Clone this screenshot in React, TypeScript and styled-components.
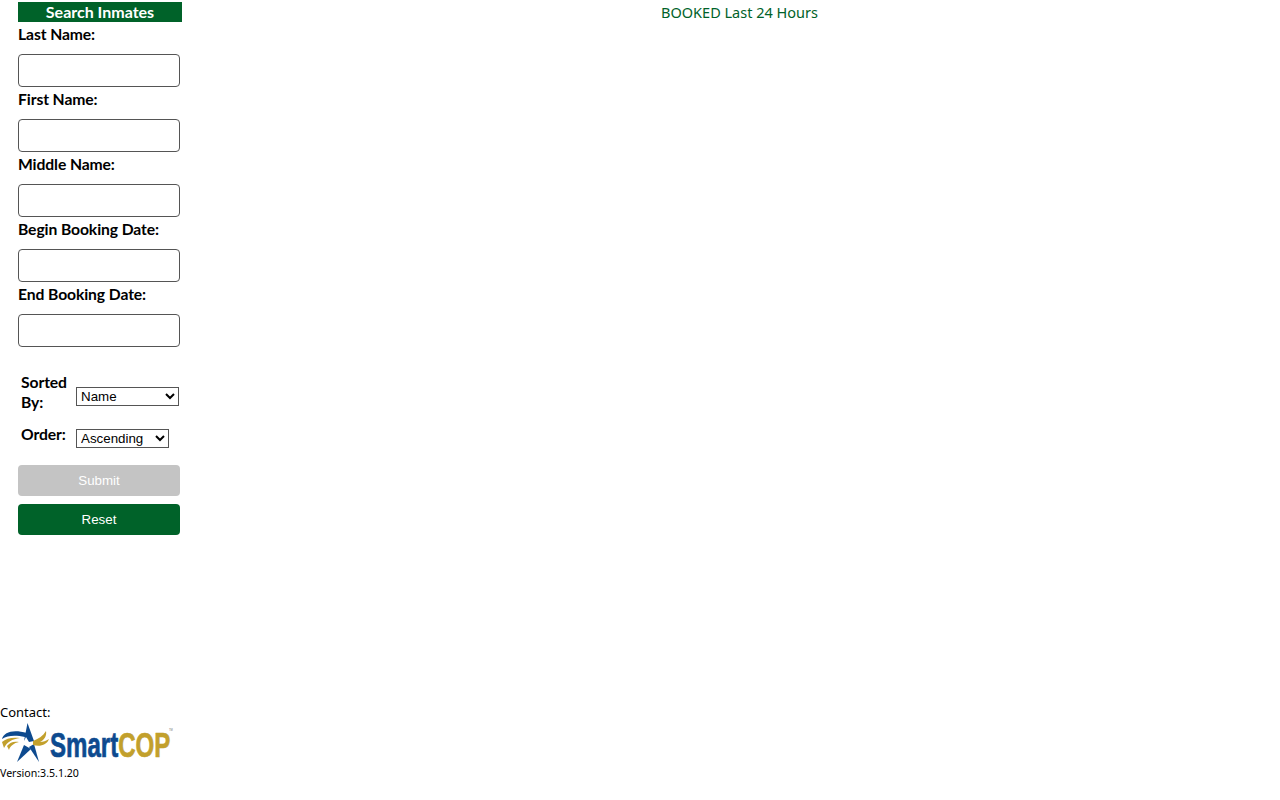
import React from 'react';
import styled, { createGlobalStyle } from 'styled-components';

const GlobalStyle = createGlobalStyle`
  html, body {
    margin: 0;
    padding: 0;
    background: #fff;
  }
  body {
    font-family: "Lato", "Noto Sans", sans-serif;
  }
`;

const Page = styled.div`
  display: flex;
  height: 800px;
  overflow: hidden;
`;

const Sidebar = styled.aside`
  display: flex;
  flex-direction: column;
  width: 182px;
  flex: none;
`;

const SearchForm = styled.form`
  display: flex;
  flex-direction: column;
  padding: 2px 0 0 18px;
`;

const FormTitle = styled.div`
  height: 20px;
  line-height: 20px;
  background: #006229;
  color: #fff;
  font-size: 16px;
  font-weight: 700;
  text-align: center;
`;

const FieldLabel = styled.label`
  display: block;
  height: 32px;
  line-height: 24px;
  font-size: 15.7px;
  letter-spacing: -0.1px;
  font-weight: 700;
  color: #000;
`;

const TextInput = styled.input`
  display: block;
  box-sizing: border-box;
  width: 162px;
  height: 33px;
  border: 1px solid #555;
  border-radius: 4px;
  background: #fff;
  padding: 0 6px;
  margin: 0;
`;

const SortTable = styled.div`
  display: grid;
  grid-template-columns: 55px auto;
  justify-content: start;
  align-items: center;
  row-gap: 8px;
  padding: 25px 0 0 3px;
`;

const SortLabel = styled.span`
  font-size: 15.7px;
  letter-spacing: -0.1px;
  font-weight: 700;
  line-height: 20px;
  width: 50px;
  color: #000;
`;

const SortSelect = styled.select<{ $width: number }>`
  font-family: "Liberation Sans", Arial, sans-serif;
  font-size: 13.33px;
  height: 19px;
  width: ${props => props.$width}px;
  margin: 9px 0 0;
  background: #fff;
  color: #000;
  border: 1px solid #555;
  border-radius: 0;
`;

const ActionButton = styled.button<{ $top: number }>`
  display: block;
  box-sizing: border-box;
  width: 162px;
  height: 31px;
  border: none;
  border-radius: 4px;
  background: ${props => (props.disabled ? '#c4c4c4' : '#006229')};
  color: #fff;
  font-family: "Liberation Sans", Arial, sans-serif;
  font-size: 13.33px;
  padding: 0;
  margin-top: ${props => props.$top}px;
`;

const Footer = styled.footer`
  margin-top: auto;
  padding-bottom: 19px;
  font-family: "Noto Sans", sans-serif;
  color: #000;
`;

const ContactLine = styled.div`
  font-size: 13px;
  line-height: 17px;
`;

const VersionLine = styled.div`
  font-size: 10.6px;
  line-height: 15px;
`;

const Logo = styled.div`
  display: flex;
  align-items: flex-start;
  height: 44px;
  margin-top: 1px;

  svg {
    display: block;
    flex: none;
  }
`;

const Main = styled.main`
  flex: 1;
  padding: 2px 0 0 17px;
`;

const ResultsTitle = styled.div`
  text-align: center;
  color: #006229;
  font-family: "Noto Sans", "Lato", sans-serif;
  font-size: 14.5px;
  line-height: 21px;
`;

const LogoMark = () => (
  <svg width="50" height="40" viewBox="0 0 50 40">
    {/* star */}
    <path d="M27.5 1 L34 19 L29 20 L26 15 L24 19 Z" fill="#0d4a8f" />
    <path d="M17 40 L24 23 L31 27 Z" fill="#0d4a8f" />
    <path d="M39 40 L29 25 L34 22 Z" fill="#0d4a8f" />
    {/* eagle head */}
    <path d="M2 17 C4 10 13 7 27 11 L25 15 C16 13 8 13 2 17 Z" fill="#0d4a8f" />
    <path d="M2 20 C6 16 13 15 20 16 C12 17 7 20 4 26 Z" fill="#c2a02c" />
    <path d="M7 24 C10 20 14 19 19 20 C14 21 10 24 9 28 Z" fill="#c2a02c" />
    {/* wing */}
    <path d="M33 19 C38 17 43 14 46 9 C47 14 44 18 40 20 C43 20 46 19 49 17 C47 23 40 25 33 23 Z" fill="#c2a02c" />
  </svg>
);

// squeezed horizontally through the viewBox, the logo type is a condensed bold
const LogoWordmark = () => (
  <svg width="125" height="44" viewBox="0 0 187 44" preserveAspectRatio="none">
    <text
      x="0"
      y="35"
      fontFamily="'Liberation Sans', Arial, sans-serif"
      fontWeight="700"
      fontSize="36"
      strokeWidth="0.7"
    >
      <tspan fill="#0d4a8f" stroke="#0d4a8f">Smart</tspan>
      <tspan fill="#c2a02c" stroke="#c2a02c">COP</tspan>
    </text>
    <text x="178" y="9" fontFamily="'Liberation Sans', Arial, sans-serif" fontSize="4" fill="#777">TM</text>
  </svg>
);

const fields = ['Last Name:', 'First Name:', 'Middle Name:', 'Begin Booking Date:', 'End Booking Date:'];

const App = () => {
  return (
    <Page>
      <GlobalStyle />
      <Sidebar>
        <SearchForm onSubmit={e => e.preventDefault()}>
          <FormTitle>Search Inmates</FormTitle>
          {fields.map(name => (
            <React.Fragment key={name}>
              <FieldLabel>{name}</FieldLabel>
              <TextInput type="text" />
            </React.Fragment>
          ))}
          <SortTable>
            <SortLabel>Sorted By:</SortLabel>
            <SortSelect $width={103} defaultValue="Name">
              <option>Name</option>
              <option>Booking Date</option>
            </SortSelect>
            <SortLabel>Order:</SortLabel>
            <SortSelect $width={93} defaultValue="Ascending">
              <option>Ascending</option>
              <option>Descending</option>
            </SortSelect>
          </SortTable>
          <ActionButton disabled $top={17}>Submit</ActionButton>
          <ActionButton type="reset" $top={8}>Reset</ActionButton>
        </SearchForm>
        <Footer>
          <ContactLine>Contact:</ContactLine>
          <Logo>
            <LogoMark />
            <LogoWordmark />
          </Logo>
          <VersionLine>Version:3.5.1.20</VersionLine>
        </Footer>
      </Sidebar>
      <Main>
        <ResultsTitle>BOOKED Last 24 Hours</ResultsTitle>
      </Main>
    </Page>
  );
};

export default App;
